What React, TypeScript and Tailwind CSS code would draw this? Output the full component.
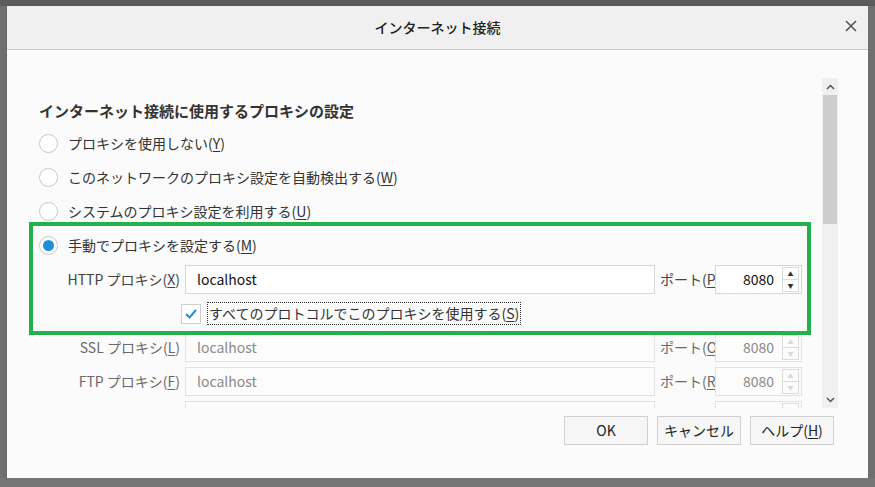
import React from "react";

const F = { fontFamily: '"Noto Sans CJK JP", "Noto Sans", sans-serif' };

function Radio({ checked, label }: { checked?: boolean; label: React.ReactNode }) {
  return (
    <div className="flex items-center h-[34px]">
      <div className="w-[19px] h-[19px] rounded-full border border-[#c9c9c9] bg-white flex items-center justify-center ml-[39px]">
        {checked && <div className="w-[11px] h-[11px] rounded-full bg-[#1e8fd8]" />}
      </div>
      <span className="ml-[10px] text-[14px] text-[#333]">{label}</span>
    </div>
  );
}

function U({ c }: { c: string }) {
  return <span className="underline underline-offset-2">{c}</span>;
}

function Spin({ disabled }: { disabled?: boolean }) {
  const col = disabled ? "text-[#d8d8d8]" : "text-[#333]";
  return (
    <div className="flex flex-col w-[17px] h-[25px] border border-[#dcdcdc] mr-[2px]">
      <div className={`flex-1 flex items-center justify-center text-[6px] leading-none ${col} border-b border-[#dcdcdc]`}>▲</div>
      <div className={`flex-1 flex items-center justify-center text-[6px] leading-none ${col}`}>▼</div>
    </div>
  );
}

function ProxyRow({ label, k, portK, disabled }: { label: string; k: string; portK: string; disabled?: boolean }) {
  const tc = disabled ? "text-[#8a8a8a]" : "text-[#111]";
  const lc = disabled ? "text-[#6a6a6a]" : "text-[#444]";
  const bc = disabled ? "border-[#e2e2e2] bg-[#fcfcfc]" : "border-[#d6d6d6] bg-white";
  return (
    <div className="flex items-center h-[34px]">
      <div className={`w-[173px] text-right text-[14px] whitespace-nowrap ${lc}`}>
        {label}(<U c={k} />)
      </div>
      <div className={`ml-[5px] w-[470px] h-[29px] border ${bc} flex items-center px-[11px] text-[14px] ${tc}`}>localhost</div>
      <div className={`ml-[5px] w-[55px] text-[14px] whitespace-nowrap ${lc}`}>
        ポート(<U c={portK} />)
      </div>
      <div className={`w-[87px] h-[29px] border ${bc} flex items-center justify-end text-[14px] ${tc}`}>
        <span className="mr-[8px]">8080</span>
        <Spin disabled={disabled} />
      </div>
    </div>
  );
}

export default function App() {
  return (
    <div className="w-[875px] h-[487px] bg-[#767676] overflow-hidden flex flex-col" style={F}>
      <div className="h-[6px] bg-[#5c5c5c]" />
      <div className="flex flex-1">
        <div className="w-[7px] bg-[#6f6f6f]" />
        <div className="w-[861px] h-[472px] bg-[#fbfbfb] flex flex-col shadow-[2px_2px_4px_rgba(0,0,0,0.4)]">
          <div className="h-[44px] bg-[#f0f0f0] border-b border-[#c8c8c8] flex items-center relative">
            <div className="flex-1 text-center text-[14px] font-medium text-[#222]">インターネット接続</div>
            <div className="absolute right-[10px] top-[13px] text-[#555]">
              <svg width="14" height="14" viewBox="0 0 14 14"><path d="M2 2L12 12M12 2L2 12" stroke="#555" strokeWidth="1.6" /></svg>
            </div>
          </div>
          <div className="flex mt-[28px] h-[330px]">
            <div className="w-[815px] relative overflow-hidden">
              <div className="pt-[22px] pl-[32px] text-[15px] font-bold text-[#333]">インターネット接続に使用するプロキシの設定</div>
              <div className="-ml-[7px] mt-[4px]">
                <Radio label={<>プロキシを使用しない(<U c="Y" />)</>} />
                <Radio label={<>このネットワークのプロキシ設定を自動検出する(<U c="W" />)</>} />
                <Radio label={<>システムのプロキシ設定を利用する(<U c="U" />)</>} />
                <Radio checked label={<>手動でプロキシを設定する(<U c="M" />)</>} />
              </div>
              <ProxyRow label="HTTP プロキシ" k="X" portK="P" />
              <div className="flex items-center h-[34px] pl-[174px]">
                <div className="w-[20px] h-[20px] border border-[#cfcfcf] bg-white flex items-center justify-center">
                  <svg width="12" height="10" viewBox="0 0 12 10"><path d="M1 5l3.5 3.5L11 1" stroke="#1e8fd8" strokeWidth="2" fill="none" /></svg>
                </div>
                <span className="ml-[6px] text-[14px] text-[#333] border border-dotted border-[#333] px-[1px]">
                  すべてのプロトコルでこのプロキシを使用する(<U c="S" />)
                </span>
              </div>
              <ProxyRow label="SSL プロキシ" k="L" portK="O" disabled />
              <ProxyRow label="FTP プロキシ" k="F" portK="R" disabled />
              <ProxyRow label="SOCKS ホスト" k="C" portK="T" disabled />
              <div className="absolute left-[22px] top-[144px] w-[782px] h-[113px] border-[4px] border-[#22b14c]" />
            </div>
            <div className="w-[16px] bg-[#f0f0f0] flex flex-col">
              <div className="h-[17px] flex items-center justify-center">
                <svg width="9" height="6" viewBox="0 0 9 6"><path d="M1 5l3.5-3.5L8 5" stroke="#555" strokeWidth="1.5" fill="none" /></svg>
              </div>
              <div className="h-[129px] bg-[#cdcdcd] mx-[1px]" />
              <div className="flex-1" />
              <div className="h-[17px] flex items-center justify-center">
                <svg width="9" height="6" viewBox="0 0 9 6"><path d="M1 1l3.5 3.5L8 1" stroke="#555" strokeWidth="1.5" fill="none" /></svg>
              </div>
            </div>
          </div>
          <div className="flex justify-end gap-[9px] pr-[34px] mt-[8px]">
            {[<>OK</>, <>キャンセル</>, <>ヘルプ(<U c="H" />)</>].map((l, i) => (
              <div key={i} className="w-[84px] h-[29px] border border-[#d0d0d0] bg-[#f6f6f6] flex items-center justify-center text-[14px] text-[#222]">
                {l}
              </div>
            ))}
          </div>
        </div>
        <div className="w-[7px] bg-[#6f6f6f]" />
      </div>
      <div className="h-[9px] bg-[#767676]" />
    </div>
  );
}
